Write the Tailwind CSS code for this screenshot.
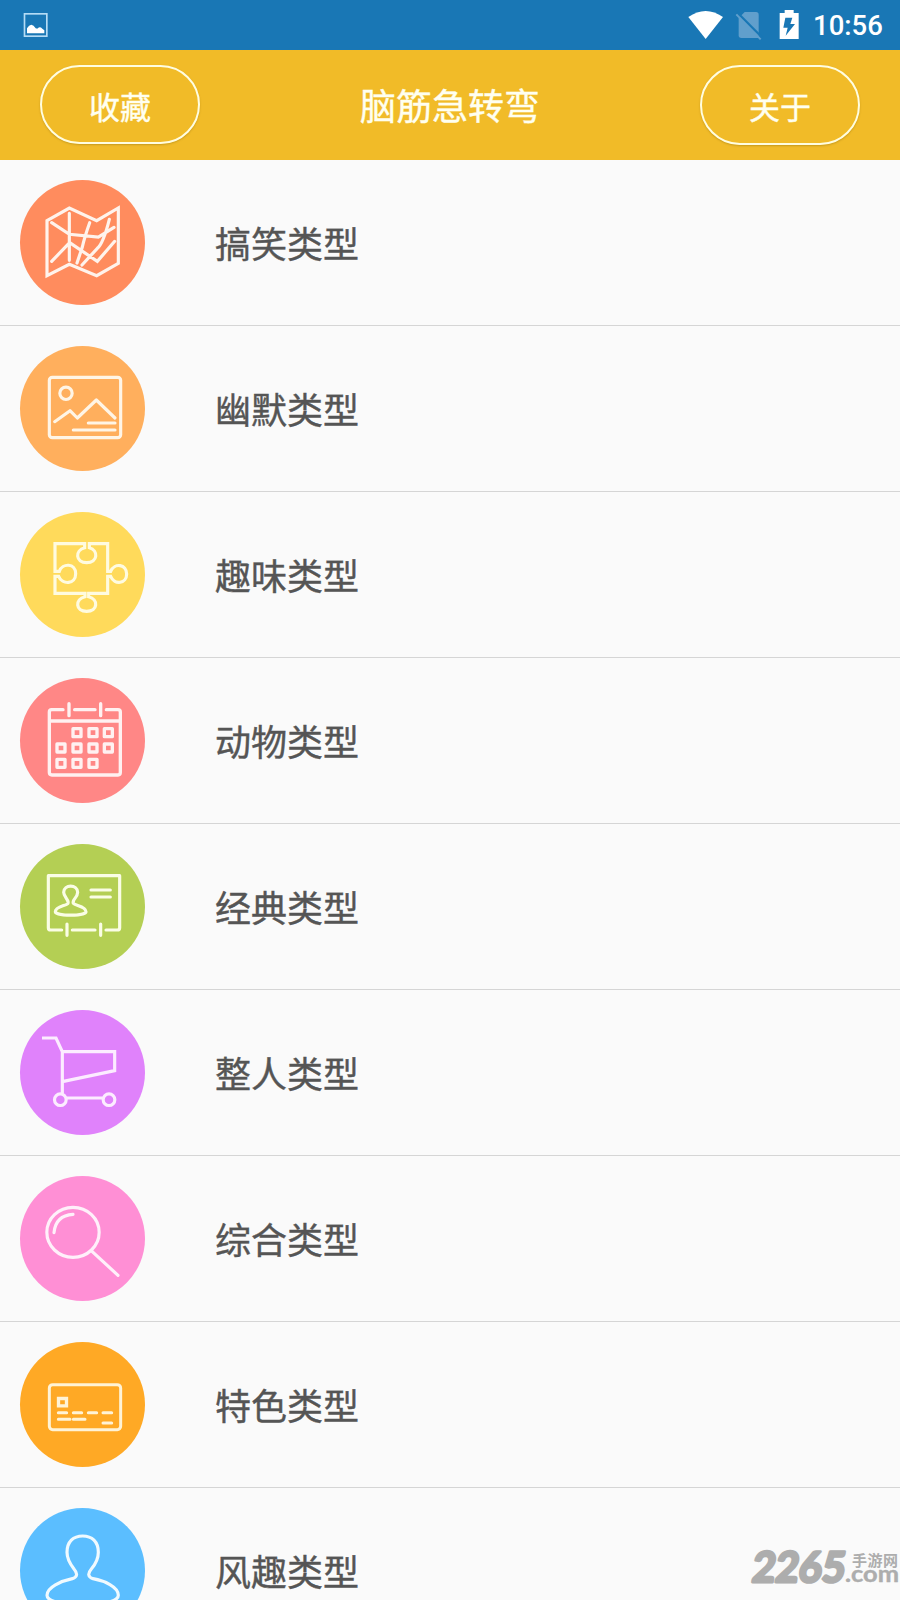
<!DOCTYPE html>
<html lang="zh-CN">
<head>
<meta charset="utf-8">
<title>脑筋急转弯</title>
<script src="https://cdn.jsdelivr.net/npm/@tailwindcss/browser@4"></script>
</head>
<body class="bg-[#fafafa] font-[Roboto,'Noto_Sans_CJK_SC',sans-serif]">
<div class="relative flex h-[1600px] w-[900px] flex-col overflow-hidden">
  <!-- Status bar -->
  <div class="flex h-[50px] shrink-0 items-center justify-between bg-[#1977b5]">
    <svg class="h-[50px] w-[60px]" viewBox="0 0 180 150" fill="none"><rect x="73.500" y="41.500" width="67" height="67" stroke="#b4dcf5" stroke-width="5"/><path d="M81 100V85Q87 75 94 74Q101 75 107 85Q113 87 115 83Q121 80 127 86L133 91V100Z" fill="#fff"/></svg>
    <div class="flex h-[50px] items-center">
      <svg class="h-[50px] w-[124px]" viewBox="700 0 372 150"><path d="M716 51Q768 15 820 51L768 117Z" fill="#fff"/><path d="M885 36H919Q927 36 927 44V114H875Q867 114 867 106V54Z" fill="#619fcc"/><path d="M862 37L939 114" stroke="#1977b5" stroke-width="7"/><path d="M860 43L933 118" stroke="#619fcc" stroke-width="6"/><path d="M1005 30H1032V39H1047V117H990V39H1005Z" fill="#fff"/><path d="M1007 53H1028L1022 72H1036L1008 107L1014 83H1001Z" fill="#1977b5"/></svg>
      <div class="w-[93px] pl-[6px] pt-[2px] text-[27.500px] font-medium leading-[54px] text-white">10:56</div>
    </div>
  </div>
  <!-- Title bar -->
  <header class="flex h-[110px] shrink-0 items-start justify-between bg-[#f1bb28] px-10 pt-[15px] text-[#fffff0] [-webkit-text-stroke:0.4px_#fffff0]">
    <button class="h-[79px] w-[160px] rounded-[40px] border-2 border-[#fffde0] pt-[9px] text-[31px] shadow-[0_1px_2px_rgba(120,90,0,0.35)]">收藏</button>
    <h1 class="pt-[6px] text-[36px] leading-[75px]">脑筋急转弯</h1>
    <button class="h-[80px] w-[160px] rounded-[40px] border-2 border-[#fffde0] pt-[8px] text-[31px] shadow-[0_1px_2px_rgba(120,90,0,0.35)]">关于</button>
  </header>
  <!-- Category list -->
  <ul class="flex flex-col text-[36px] text-[#555] [-webkit-text-stroke:0.4px_#555]">
    <li class="flex h-[166px] shrink-0 items-center gap-[70px] border-b border-[#d5d5d5] pl-5">
      <svg class="size-[125px] rounded-full bg-[#ff8c5e]" viewBox="60 45 375 375" fill="none" stroke="#fff3ec" stroke-width="9.500" stroke-linecap="round"><path d="M141 167L208 129L290 167L355 129V295L290 332L208 298L141 332Z"/><path d="M208 145V286M155 173L208 208L295 216L342 187M155 289L209 233L292 289L344 229M269 173Q253 218 247 246L231 294M328 163Q310 235 292 250L246 300"/></svg>
      <span class="pt-[6px]">搞笑类型</span>
    </li>
    <li class="flex h-[166px] shrink-0 items-center gap-[70px] border-b border-[#d5d5d5] pl-5">
      <svg class="size-[125px] rounded-full bg-[#ffaf5d]" viewBox="60 48 375 375" fill="none" stroke="#fff5e6" stroke-width="9.500" stroke-linecap="round" stroke-linejoin="round"><rect x="148" y="142" width="214" height="181" rx="9"/><circle cx="198" cy="190" r="18.500"/><path d="M164 275L210 242L232 264L289 210L345 264M265 279H345M220 300H345"/></svg>
      <span class="pt-[6px]">幽默类型</span>
    </li>
    <li class="flex h-[166px] shrink-0 items-center gap-[70px] border-b border-[#d5d5d5] pl-5">
      <svg class="size-[125px] rounded-full bg-[#ffda5b]" viewBox="60 51 375 375" fill="none" stroke="#fffbe0" stroke-width="9.500"><path d="M254 158V146H165V229H178C187 203 227 204 227 236C227 268 187 271 176 244H165V295H255V305C224 313 226 349 260 349C294 349 296 313 266 305V295H323V244H332C344 272 380 266 380 237C380 208 344 202 332 229H323V146H268V158C296 166 294 203 260 203C226 203 224 166 254 158Z"/></svg>
      <span class="pt-[6px]">趣味类型</span>
    </li>
    <li class="flex h-[166px] shrink-0 items-center gap-[70px] border-b border-[#d5d5d5] pl-5">
      <svg class="size-[125px] rounded-full bg-[#ff8786]" viewBox="60 54 375 375" fill="none" stroke="#fff1f1" stroke-width="10" stroke-linecap="round" stroke-linejoin="round"><path d="M189 149H155Q148 149 148 156V337Q148 345 156 345H354Q361 345 361 337V156Q361 149 354 149H319M224 149H285M148 183H361M207 131V167M302 131V167"/><path stroke-linecap="butt" d="M219 206h24v24h-24ZM267 206h24v24h-24ZM313 206h24v24h-24ZM171 252h24v24h-24ZM219 252h24v24h-24ZM267 252h24v24h-24ZM313 252h24v24h-24ZM171 298h24v24h-24ZM219 298h24v24h-24ZM267 298h24v24h-24Z"/></svg>
      <span class="pt-[6px]">动物类型</span>
    </li>
    <li class="flex h-[166px] shrink-0 items-center gap-[70px] border-b border-[#d5d5d5] pl-5">
      <svg class="size-[125px] rounded-full bg-[#b4cf54]" viewBox="60 57 375 375" fill="none" stroke="#fafde5" stroke-width="9.500" stroke-linecap="round" stroke-linejoin="round"><path d="M185 315H152Q145 315 145 308V152H359V308Q359 315 352 315H318M217 315H285M201 297V331M302 297V331M273 195H331M273 216H331"/><path d="M204 235C208 224 191 217 191 202C191 177 233 177 233 202C233 218 215 224 220 235C225 242 258 243 258 260C258 274 166 274 166 260C166 244 201 242 204 235Z"/></svg>
      <span class="pt-[6px]">经典类型</span>
    </li>
    <li class="flex h-[166px] shrink-0 items-center gap-[70px] border-b border-[#d5d5d5] pl-5">
      <svg class="size-[125px] rounded-full bg-[#e082fb]" viewBox="60 60 375 375" fill="none" stroke="#fcecff" stroke-width="9.500"><path d="M126 144H168L187 185H344V242L187 275M187 185V310M201 324H307"/><circle cx="181" cy="329" r="17.500"/><circle cx="327" cy="329" r="17.500"/></svg>
      <span class="pt-[6px]">整人类型</span>
    </li>
    <li class="flex h-[166px] shrink-0 items-center gap-[70px] border-b border-[#d5d5d5] pl-5">
      <svg class="size-[125px] rounded-full bg-[#ff8fd5]" viewBox="60 63 375 375" fill="none" stroke="#fff0fa" stroke-width="9.500" stroke-linecap="round"><ellipse cx="219" cy="232" rx="78.500" ry="75"/><path d="M162 233Q167 181 219 178M276 289L354 361"/></svg>
      <span class="pt-[6px]">综合类型</span>
    </li>
    <li class="flex h-[166px] shrink-0 items-center gap-[70px] border-b border-[#d5d5d5] pl-5">
      <svg class="size-[125px] rounded-full bg-[#ffa925]" viewBox="60 66 375 375" fill="none" stroke="#fff3d6" stroke-width="9" stroke-linecap="round"><rect x="148" y="194" width="214" height="135" rx="10"/><path stroke-width="10" stroke-linecap="butt" d="M175.500 235.500h24v22h-24Z"/><path d="M175 278H200M220 278H245M265 278H290M309 278H335M175 298H210M220 298H255M309 309H335"/></svg>
      <span class="pt-[6px]">特色类型</span>
    </li>
    <li class="flex h-[166px] shrink-0 items-center gap-[70px] border-b border-[#d5d5d5] pl-5">
      <svg class="size-[125px] rounded-full bg-[#5bbeff]" viewBox="60 84 375 375" fill="none" stroke="#f0faff" stroke-width="9.500"><path d="M217 296C233 291 233 280 222 267C207 248 201 235 201 217C201 185 220 168 248 168C276 168 295 185 295 217C295 236 287 252 274 267C263 280 263 291 279 296C313 302 355 321 355 346C355 365 309 373 248 373C187 373 141 365 141 346C141 322 183 303 217 296Z"/></svg>
      <span class="pt-[6px]">风趣类型</span>
    </li>
  </ul>
  <!-- Corner watermark -->
  <svg class="absolute bottom-0 right-0 h-[80px] w-[180px]" viewBox="0 0 180 80" fill="#adadad">
    <g stroke="#adadad" stroke-linejoin="round">
      <text transform="translate(31 62) skewX(-7)" class="font-[Lato,sans-serif] text-[42px] font-bold" stroke-width="3" textLength="93" lengthAdjust="spacingAndGlyphs">2265</text>
      <text x="125" y="62" class="font-[Lato,sans-serif] text-[22px] font-bold" stroke-width="0.400" textLength="54" lengthAdjust="spacingAndGlyphs">.com</text>
    </g>
    <text x="132" y="46" class="font-['Noto_Sans_CJK_SC',sans-serif] text-[15px] font-bold" textLength="46">手游网</text>
  </svg>
</div>
</body>
</html>
